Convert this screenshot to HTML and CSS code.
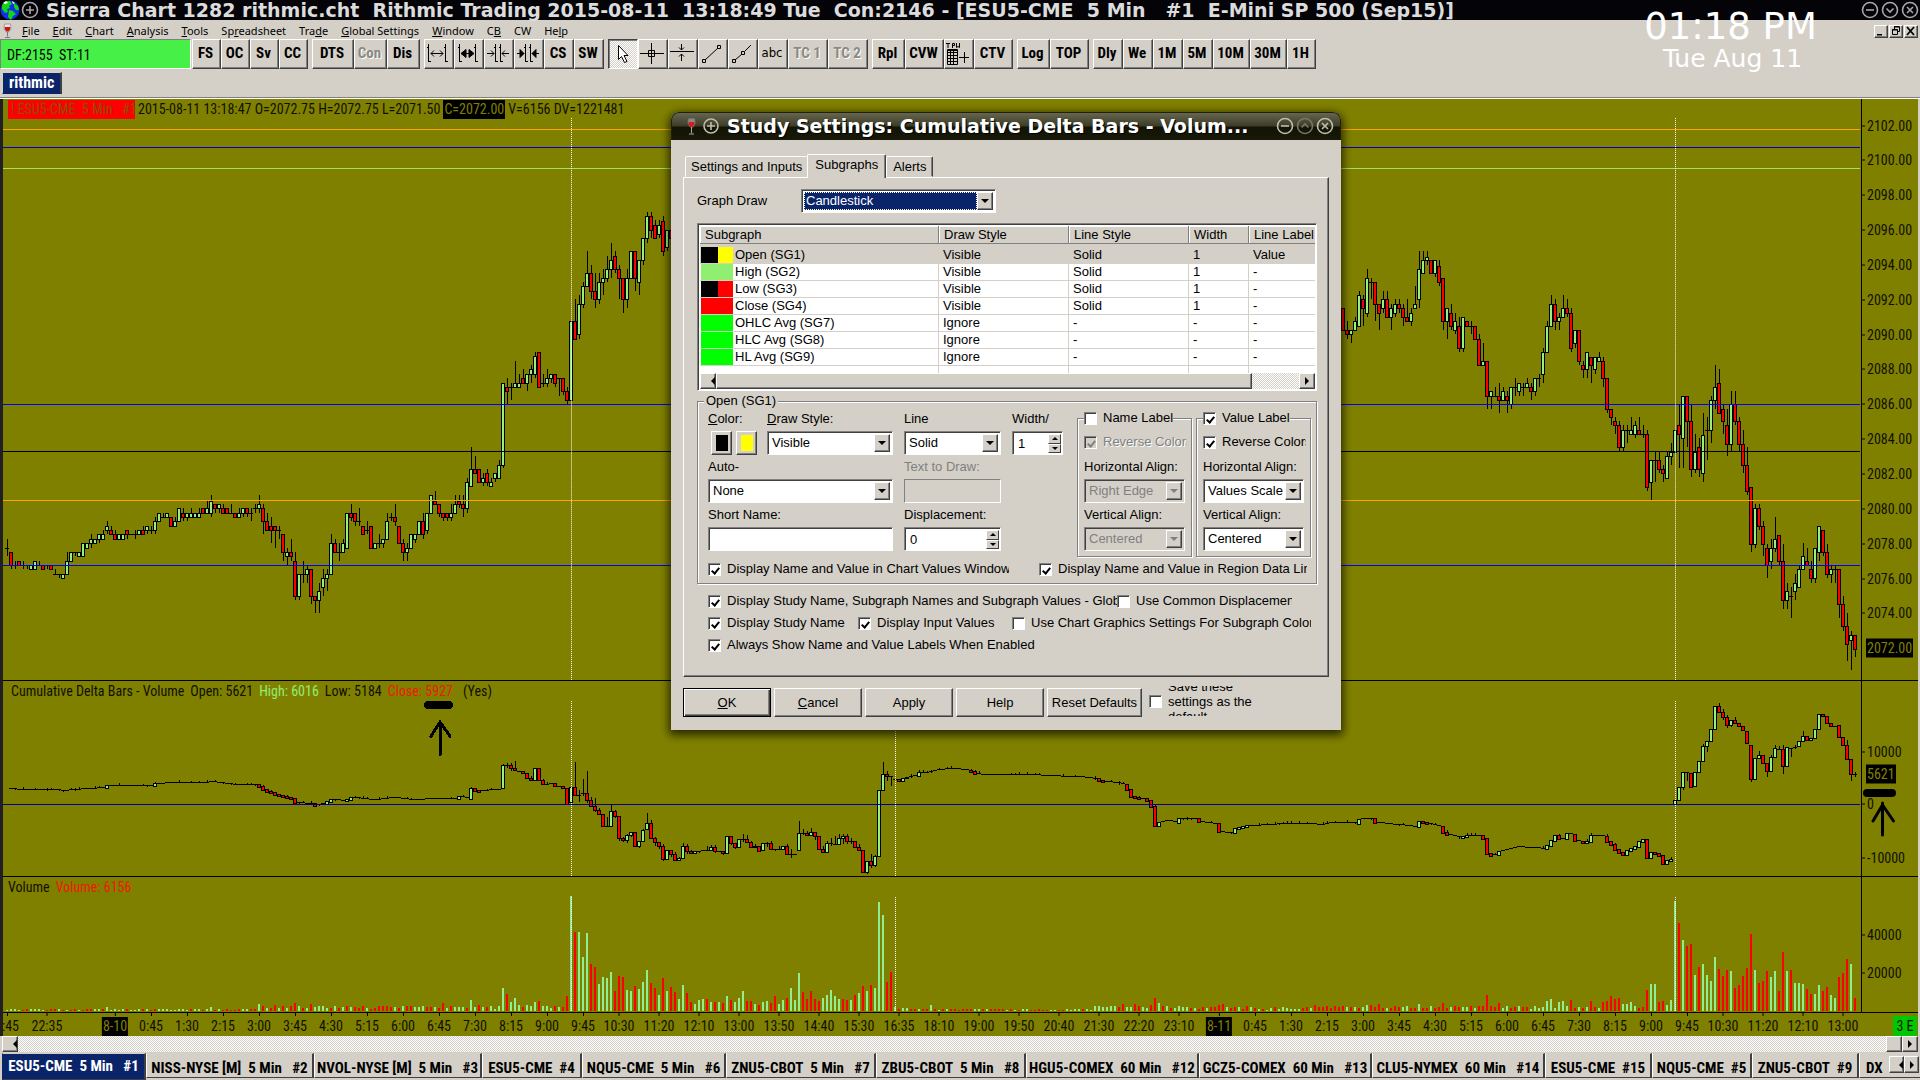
FILE: index.html
```html
<!DOCTYPE html>
<html lang="en">
<head>
<meta charset="utf-8">
<title>Sierra Chart 1282 rithmic.cht</title>
<link rel="stylesheet" href="styles.css">
</head>
<body>
<header class="titlebar">
  <svg class="globe" width="20" height="20" viewBox="0 0 20 20"><circle cx="10" cy="10" r="9.500" fill="#1030e8"/><path d="M2 5l4-4 4 0 2 3-3 2 1 2-3 1 1 3-3 1-3-4zM9 10l4 1 3 3-3 2-2 4-3-3zM14 3l4 3 1 4-3 0-2-3z" fill="#10d810"/><path d="M3 3l3-2 2 2-3 1zM12 1l3 2-2 1z" fill="#fff"/></svg>
  <svg width="20" height="20" viewBox="0 0 20 20" class="ring"><circle cx="10" cy="10" r="7.500"/><path d="M6 10h8M10 6v8"/></svg>
  <h1>Sierra Chart 1282 rithmic.cht&nbsp; Rithmic Trading 2015-08-11&nbsp; 13:18:49 Tue&nbsp; Con:2146 - [ESU5-CME&nbsp; 5 Min&nbsp;&nbsp; #1&nbsp; E-Mini SP 500 (Sep15)]</h1>
  <span class="winbtns">
    <button aria-label="Minimize"><svg width="20" height="20" viewBox="0 0 20 20" class="ring"><circle cx="10" cy="10" r="7.500"/><path d="M6 10h8"/></svg></button>
    <button aria-label="Restore"><svg width="20" height="20" viewBox="0 0 20 20" class="ring"><circle cx="10" cy="10" r="7.500"/><path d="M6.500 8.500l3.500 3.500 3.500-3.500"/></svg></button>
    <button aria-label="Close"><svg width="20" height="20" viewBox="0 0 20 20" class="ring"><circle cx="10" cy="10" r="7.500"/><path d="M7 7l6 6M13 7l-6 6"/></svg></button>
  </span>
</header>

<nav class="menubar">
  <svg class="glass" width="9" height="16" viewBox="0 0 9 16"><path d="M1.500 1h6l.5 4.500-2 3.500H3L1 5.500z" fill="#e8e4e0" stroke="#888" stroke-width=".7"/><path d="M1.500 4h6l-.5 2.500L5.500 8.500h-2L2 6.500z" fill="#c81818"/><path d="M4.500 9v4.500M2 14.500h5" stroke="#777" fill="none"/></svg>
  <a href="#"><u>F</u>ile</a><a href="#"><u>E</u>dit</a><a href="#"><u>C</u>hart</a><a href="#"><u>A</u>nalysis</a><a href="#"><u>T</u>ools</a><a href="#">Sp<u>r</u>eadsheet</a><a href="#">Tra<u>d</u>e</a><a href="#"><u>G</u>lobal Settings</a><a href="#"><u>W</u>indow</a><a href="#">C<u>B</u></a><a href="#">CW</a><a href="#">He<u>l</u>p</a>
  <span class="mdi">
    <button class="raised" aria-label="Minimize chart"><svg width="12" height="10" viewBox="0 0 12 10"><path d="M2 8h5v1.500H2z"/></svg></button>
    <button class="raised" aria-label="Restore chart"><svg width="12" height="10" viewBox="0 0 12 10" fill="none" stroke="#000"><path d="M4.500 3V.5h5v5H8M2.500 3.500h5v5h-5zM4 1h5M2 4h5"/></svg></button>
    <button class="raised" aria-label="Close chart"><svg width="12" height="10" viewBox="0 0 12 10"><path d="M2 1l7 8M9 1L2 9" stroke="#000" stroke-width="1.800"/></svg></button>
  </span>
</nav>

<section class="toolbar">
  <div class="status">DF:2155&nbsp; ST:11</div>
  <div class="group"><button class="w29">FS</button><button class="w29">OC</button><button class="w29">Sv</button><button class="w29">CC</button></div>
  <div class="group"><button class="w42">DTS</button><button class="w33" disabled>Con</button><button class="w33">Dis</button></div>
  <div class="group">
    <button class="w30" aria-label="Increase spacing"><svg width="26" height="26" viewBox="0 0 26 26"><path d="M3.500 3v18M2 6.500h2M4 20.500h2M20.500 3v18M19 6.500h2M21 20.500h2M6 12.500h12M9 9.500l-3 3 3 3M15 9.500l3 3-3 3"/></svg></button>
    <button class="w30" aria-label="Increase width"><svg width="26" height="26" viewBox="0 0 26 26"><path d="M4.500 3v18M3 6.500h2M5 20.500h2M20.500 3v18M19 6.500h2M21 20.500h2M6 12.500h12"/><path d="M6 12.500l5-4v8zM19 12.500l-5-4v8z" fill="#000"/></svg></button>
    <button class="w30" aria-label="Decrease spacing"><svg width="26" height="26" viewBox="0 0 26 26"><path d="M10.500 3v18M9 6.500h2M11 20.500h2M15.500 3v18M14 6.500h2M16 20.500h2M2 12.500h7M6 9.500l3 3-3 3M24 12.500h-7M20 9.500l-3 3 3 3"/></svg></button>
    <button class="w30" aria-label="Decrease width"><svg width="26" height="26" viewBox="0 0 26 26"><path d="M10.500 3v18M9 6.500h2M11 20.500h2M15.500 3v18M14 6.500h2M16 20.500h2M2 12.500h7M24 12.500h-7"/><path d="M9 12.500l-4-4v8zM17 12.500l4-4v8z" fill="#000"/></svg></button>
    <button class="w30">CS</button><button class="w30">SW</button>
  </div>
  <div class="group">
    <button class="w30 pressed" aria-label="Pointer"><svg width="26" height="26" viewBox="0 0 26 26"><path d="M9.500 4.500v14l3-3 3 6 2.500-1-3-6h4z" fill="#fff"/></svg></button>
    <button class="w30" aria-label="Cross hair"><svg width="26" height="26" viewBox="0 0 26 26"><path d="M1 12.500h24M12.500 2v21M9.500 9.500h6v6h-6z"/></svg></button>
    <button class="w30" aria-label="Horizontal line"><svg width="26" height="26" viewBox="0 0 26 26"><path d="M1 10.500h24M12.500 3v6M10 6.500l2.500 2.500L15 6.500M12.500 20v-7M10 15.500l2.500-2.500 2.500 2.500"/></svg></button>
    <button class="w30" aria-label="Line"><svg width="26" height="26" viewBox="0 0 26 26"><path d="M6 19L19 7M3.500 18.500h3v3h-3zM18.500 4.500h3v3h-3z"/></svg></button>
    <button class="w30" aria-label="Ray"><svg width="26" height="26" viewBox="0 0 26 26"><path d="M6 19l7-6M16 10l6-6M3.500 18.500h3v3h-3zM12.500 10.500h3v3h-3z"/></svg></button>
    <button class="w30 plain">abc</button><button class="w40" disabled>TC 1</button><button class="w40" disabled>TC 2</button>
  </div>
  <div class="group"><button class="w33">Rpl</button><button class="w39">CVW</button><button class="w30" aria-label="Trade price window"><svg width="26" height="26" viewBox="0 0 26 26"><path d="M1 2.500h4M3 2v5M7.500 7V2.500h2v2h-2M11.500 2v4.500l1.500-1 1.500 1V2" /><path d="M2.500 8.500h10v15h-10zM2 11.500h11M2 14.500h11M2 17.500h11M2 20.500h11M5.500 9v14M8.500 9v14M2 9.500h10M14 16.500h10M19.500 11v11"/></svg></button><button class="w39">CTV</button></div>
  <div class="group"><button class="w33">Log</button><button class="w39">TOP</button></div>
  <div class="group"><button class="w30">Dly</button><button class="w30">We</button><button class="w30">1M</button><button class="w30">5M</button><button class="w37">10M</button><button class="w37">30M</button><button class="w29">1H</button></div>
</section>

<section class="booktabs"><button>rithmic</button></section>

<main class="chart">
  <section class="pane price">
    <div class="plot"><svg id="price" preserveAspectRatio="none" viewBox="3 99 1858 582"></svg>
      <p class="legend"><span class="alert">! ESU5-CME&nbsp; 5 Min&nbsp;&nbsp; #1</span><span>2015-08-11 13:18:47 O=2072.75 H=2072.75 L=2071.50</span><span class="last">C=2072.00</span><span>V=6156 DV=1221481</span></p></div>
    <div class="axis" id="priceAxis"></div>
  </section>
  <section class="pane delta">
    <div class="plot"><svg id="delta" preserveAspectRatio="none" viewBox="3 682 1858 195"></svg>
      <p class="legend sub"><span>Cumulative Delta Bars - Volume</span><span>Open: 5621</span><span class="high">High: 6016</span><span>Low: 5184</span><span class="close">Close: 5927</span><span class="yes">(Yes)</span></p></div>
    <div class="axis" id="deltaAxis"><svg class="mark" width="40" height="50" viewBox="1860 788 40 50"><path d="M1866 794h25" stroke-width="8"/><path d="M1881.500 836v-32M1872 822l9.500-16 11 16" stroke-width="3"/></svg></div>
  </section>
  <section class="pane volume">
    <div class="plot"><svg id="volume" preserveAspectRatio="none" viewBox="3 878 1858 134"></svg>
      <p class="legend"><span>Volume</span><span class="close">Volume: 6156</span></p></div>
    <div class="axis" id="volumeAxis"></div>
  </section>
  <div class="time"><div class="times" id="times"></div><span class="badge">3 E</span></div>
</main>

<div class="scroll"><button class="raised" aria-label="Scroll left"><i class="tri left"></i></button><span class="track"></span><span class="thumb raised"></span><button class="raised" aria-label="Scroll right"><i class="tri right"></i></button></div>

<nav class="charttabs">
  <button class="active t144">ESU5-CME&nbsp; 5 Min&nbsp;&nbsp; #1</button><button class="t168">NISS-NYSE [M]&nbsp; 5 Min&nbsp;&nbsp; #2</button><button class="t168">NVOL-NYSE [M]&nbsp; 5 Min&nbsp;&nbsp; #3</button><button class="t100">ESU5-CME&nbsp; #4</button><button class="t144">NQU5-CME&nbsp; 5 Min&nbsp;&nbsp; #6</button><button class="t150">ZNU5-CBOT&nbsp; 5 Min&nbsp;&nbsp; #7</button><button class="t150">ZBU5-CBOT&nbsp; 5 Min&nbsp;&nbsp; #8</button><button class="t173">HGU5-COMEX&nbsp; 60 Min&nbsp;&nbsp; #12</button><button class="t173">GCZ5-COMEX&nbsp; 60 Min&nbsp;&nbsp; #13</button><button class="t173">CLU5-NYMEX&nbsp; 60 Min&nbsp;&nbsp; #14</button><button class="t107">ESU5-CME&nbsp; #15</button><button class="t100">NQU5-CME&nbsp; #5</button><button class="t107">ZNU5-CBOT&nbsp; #9</button><button class="t100">DX &nbsp;#10</button>
  <span class="spin"><button class="raised" aria-label="Previous tabs"><i class="tri left"></i></button><button class="raised" aria-label="Next tabs"><i class="tri right"></i></button></span>
</nav>

<aside class="clock"><time>01:18 PM</time><time class="date">Tue Aug 11</time></aside>

<form class="dialog" role="dialog" aria-label="Study Settings">
  <header>
    <svg width="12" height="20" viewBox="0 0 12 20"><path d="M2 2h7l.5 5-2 4H4L1.500 7z" fill="#8a8a80" stroke="#555"/><path d="M2.500 6h6L8 8.500 6.500 11h-2L3 8.500z" fill="#e01818"/><path d="M5.500 11v6M3 18h5" stroke="#aaa" fill="none"/></svg>
    <svg width="20" height="20" viewBox="0 0 20 20" class="ring"><circle cx="10" cy="10" r="7"/><path d="M6 10h8M10 6v8"/></svg>
    <h2>Study Settings: Cumulative Delta Bars - Volum...</h2>
    <span class="winbtns">
      <button type="button" aria-label="Minimize dialog"><svg width="20" height="20" viewBox="0 0 20 20" class="ring"><circle cx="10" cy="10" r="7.500"/><path d="M6 10h8"/></svg></button>
      <button type="button" aria-label="Shade dialog"><svg width="20" height="20" viewBox="0 0 20 20" class="ring dim"><circle cx="10" cy="10" r="7.500"/><path d="M6.500 11.500l3.500-3.500 3.500 3.500"/></svg></button>
      <button type="button" aria-label="Close dialog"><svg width="20" height="20" viewBox="0 0 20 20" class="ring"><circle cx="10" cy="10" r="7.500"/><path d="M7 7l6 6M13 7l-6 6"/></svg></button>
    </span>
  </header>
  <div class="dbody">
    <div class="dtabs"><button type="button">Settings and Inputs</button><button type="button" class="on">Subgraphs</button><button type="button">Alerts</button></div>
    <div class="panel">
      <div class="drawrow"><label for="gd">Graph Draw</label><span class="combo focus"><select id="gd"><option>Candlestick</option></select><i></i></span></div>
      <div class="list">
        <table>
          <colgroup><col class="c1"><col class="c2"><col class="c3"><col class="c4"><col></colgroup>
          <thead><tr><th>Subgraph</th><th>Draw Style</th><th>Line Style</th><th>Width</th><th>Line Label</th></tr></thead>
          <tbody>
            <tr class="sel"><td><b class="sw k-yellow"></b>Open (SG1)</td><td>Visible</td><td>Solid</td><td>1</td><td>Value</td></tr>
            <tr><td><b class="sw pale"></b>High (SG2)</td><td>Visible</td><td>Solid</td><td>1</td><td>-</td></tr>
            <tr><td><b class="sw k-red"></b>Low (SG3)</td><td>Visible</td><td>Solid</td><td>1</td><td>-</td></tr>
            <tr><td><b class="sw red"></b>Close (SG4)</td><td>Visible</td><td>Solid</td><td>1</td><td>-</td></tr>
            <tr><td><b class="sw green"></b>OHLC Avg (SG7)</td><td>Ignore</td><td>-</td><td>-</td><td>-</td></tr>
            <tr><td><b class="sw green"></b>HLC Avg (SG8)</td><td>Ignore</td><td>-</td><td>-</td><td>-</td></tr>
            <tr><td><b class="sw green"></b>HL Avg (SG9)</td><td>Ignore</td><td>-</td><td>-</td><td>-</td></tr>
            <tr class="rest"><td></td><td></td><td></td><td></td><td></td></tr>
          </tbody>
        </table>
        <div class="hbar"><button type="button" class="raised" aria-label="Scroll list left"><i class="tri left"></i></button><span class="raised grow"></span><span class="dither"></span><button type="button" class="raised" aria-label="Scroll list right"><i class="tri right"></i></button></div>
      </div>
      <fieldset class="sg">
        <legend>Open (SG1)</legend>
        <div class="cols">
          <div class="left">
            <div class="f color"><span><u>C</u>olor:</span><span class="chips"><button type="button" class="raised" aria-label="Primary color"><b class="black"></b></button><button type="button" class="raised" aria-label="Secondary color"><b class="yellow"></b></button></span></div>
            <div class="f"><label for="ds"><u>D</u>raw Style:</label><span class="combo"><select id="ds"><option>Visible</option></select><i></i></span></div>
            <div class="f"><label for="ls">Line</label><span class="combo"><select id="ls"><option>Solid</option></select><i></i></span></div>
            <div class="f"><label for="wd">Width/</label><span class="num"><input id="wd" value="1"><span class="ud"><i class="tri up"></i><i class="tri down"></i></span></span></div>
            <div class="f two"><label for="ac">Auto-</label><span class="combo"><select id="ac"><option>None</option></select><i></i></span></div>
            <div class="f off"><label for="td">Text to Draw:</label><input id="td" disabled></div>
            <div></div>
            <div class="f two"><label for="sn">Short Name:</label><input id="sn"></div>
            <div class="f"><label for="dp">Displacement:</label><span class="num"><input id="dp" value="0"><span class="ud"><i class="tri up"></i><i class="tri down"></i></span></span></div>
          </div>
          <fieldset class="lab">
            <legend><label class="ck"><input type="checkbox">Name Label</label></legend>
            <label class="ck off"><input type="checkbox" checked disabled>Reverse Colors</label>
            <div class="f"><label for="h1">Horizontal Align:</label><span class="combo off"><select id="h1" disabled><option>Right Edge</option></select><i></i></span></div>
            <div class="f"><label for="v1">Vertical Align:</label><span class="combo off"><select id="v1" disabled><option>Centered</option></select><i></i></span></div>
          </fieldset>
          <fieldset class="lab">
            <legend><label class="ck"><input type="checkbox" checked>Value Label</label></legend>
            <label class="ck"><input type="checkbox" checked>Reverse Colors</label>
            <div class="f"><label for="h2">Horizontal Align:</label><span class="combo"><select id="h2"><option>Values Scale</option></select><i></i></span></div>
            <div class="f"><label for="v2">Vertical Align:</label><span class="combo"><select id="v2"><option>Centered</option></select><i></i></span></div>
          </fieldset>
        </div>
        <div class="cks first"><label class="ck a"><input type="checkbox" checked>Display Name and Value in Chart Values Window</label><label class="ck b"><input type="checkbox" checked>Display Name and Value in Region Data Line</label></div>
      </fieldset>
      <div class="more">
        <div class="cks"><label class="ck c"><input type="checkbox" checked>Display Study Name, Subgraph Names and Subgraph Values - Global</label><label class="ck d"><input type="checkbox">Use Common Displacement</label></div>
        <div class="cks"><label class="ck e"><input type="checkbox" checked>Display Study Name</label><label class="ck g"><input type="checkbox" checked>Display Input Values</label><label class="ck h"><input type="checkbox">Use Chart Graphics Settings For Subgraph Colors</label></div>
        <div class="cks"><label class="ck"><input type="checkbox" checked>Always Show Name and Value Labels When Enabled</label></div>
      </div>
    </div>
    <div class="actions">
      <button type="button" class="default"><u>O</u>K</button><button type="button"><u>C</u>ancel</button><button type="button">Apply</button><button type="button">Help</button><button type="button" class="wide">Reset Defaults</button>
      <label class="ck save"><input type="checkbox"><span>Save these settings as the default</span></label>
    </div>
  </div>
</form>
<script src="script.js"></script>
</body>
</html>
```
FILE: styles.css
```css
*{box-sizing:border-box}
body{margin:0;min-height:100vh;display:flex;flex-direction:column;background:#d4d0c8;color:#000;font:13px/16px "Liberation Sans",sans-serif;overflow:hidden;position:relative}
button,input,select{font:inherit;color:inherit;margin:0;padding:0;border-radius:0}
button{background:#d4d0c8;border:0;white-space:nowrap}
h1,h2,p{margin:0;font-weight:normal}
i{display:block}
.raised{background:#d4d0c8;border:1px solid;border-color:#fff #404040 #404040 #fff;box-shadow:inset -1px -1px #808080}
.dither,.track{background:repeating-conic-gradient(#fff 0 25%,#d4d0c8 0 50%) 0 0/2px 2px}

.titlebar{display:flex;align-items:center;height:20px;background:#030308;color:#dcdcdc;flex:none}
.titlebar h1{font:bold 19px/20px "DejaVu Sans",sans-serif;margin-left:6px;flex:1;white-space:nowrap}
.ring{fill:none;stroke:#a8a8a8;stroke-width:1.6;display:block}
.ring.dim{stroke:#77776a}
.winbtns{display:flex}
.winbtns button{background:none}
.menubar{display:flex;align-items:center;height:19px;flex:none;padding:3px 2px 0 3px;font:11px/16px "Noto Sans",sans-serif}
.menubar a{color:#000;text-decoration:none;margin-right:13px}
.glass{margin-right:10px}
.mdi{margin-left:auto;display:flex;gap:1px}
.mdi button{width:14px;height:13px;display:flex;align-items:center}

.toolbar{display:flex;gap:4px;height:30px;flex:none;font:bold 15px/24px "Roboto Condensed","Roboto",sans-serif}
.status{width:191px;margin-right:-3px;padding-left:6px;line-height:30px;font-weight:normal;font-size:14px;background:#46f046;border:1px solid;border-color:#808080 #fff #fff #808080}
.group{display:flex}
.group button{height:30px;padding:0 2px 2px 0;border:1px solid;border-color:#fff #404040 #404040 #fff;box-shadow:inset -1px -1px #808080;display:flex;align-items:center;justify-content:center}
.group button:disabled{color:#8a8a84;text-shadow:1px 1px #fff}
.group svg{fill:none;stroke:#000;flex:none;margin-top:2px}
.group .pressed{border-color:#404040 #fff #fff #404040;box-shadow:inset 1px 1px #808080;background:repeating-conic-gradient(#fff 0 25%,#d4d0c8 0 50%) 0 0/2px 2px}
.group .plain{font:13px/24px "DejaVu Sans Condensed","DejaVu Sans",sans-serif}
.w29{width:29px}.w30{width:30px}.w33{width:33px}.w37{width:37px}.w39{width:39px}.w40{width:40px}.w42{width:42px}

.booktabs{height:30px;flex:none;padding:3px 2px;border-bottom:1px solid #fff;box-shadow:inset 0 -1px #808080}
.booktabs button{height:22px;padding:0 6px;background:#0a246a;color:#fff;font:bold 16px/20px "Roboto Condensed","Roboto",sans-serif;border:1px solid;border-color:#d4d0c8 #404040 #0a246a #d4d0c8;border-right-width:2px}

.chart{flex:1;display:flex;flex-direction:column;background:#808000;border-left:3px solid #202020;border-right:2px solid #d4d0c8;font:14px/18px "Roboto Condensed","Roboto",sans-serif;color:#101000;min-height:0}
.pane{display:flex;min-height:0;border-bottom:1px solid #000}
.price{flex:583 1 0}
.delta{flex:196 1 0}
.volume{flex:135 1 0}
.plot{flex:1;position:relative;min-width:0;border-right:1px solid #000}
.plot svg{display:block;width:100%;height:100%;position:absolute;inset:0;shape-rendering:crispEdges}
.axis{width:56px;position:relative}
.axis span{position:absolute;left:0;transform:translateY(-50%);line-height:19px;padding-left:5px;white-space:nowrap}
.axis span::before{content:"";position:absolute;left:0;top:9px;width:3px;height:1px;background:#000}
.axis span.last{left:4px;padding:0 1px;background:#000}
.axis span.last::before{content:none}
.legend{position:absolute;left:5px;top:1px;display:flex;line-height:19px;white-space:nowrap;gap:5px}
.volume .legend,.delta .legend{gap:6px}
.alert{background:#f00;color:#8c5000;padding:0 1px 0 3px;width:127px}
.price .legend{gap:3px}
.last{background:#000;color:#808000;padding:0 1px}
.delta .legend{left:8px}
.high{color:#90ee70}
.close{color:#f01800}
.yes{margin-left:4px}
.mark{position:absolute;left:-1px;top:106px;fill:none;stroke:#000;stroke-linecap:round}
.time{height:23px;flex:none;position:relative;display:flex;justify-content:flex-end;overflow:hidden}
.times{position:absolute;left:0;right:57px;top:0;height:23px}
.times span{position:absolute;top:4px;transform:translateX(-50%);line-height:19px}
.times span::before{content:"";position:absolute;left:50%;top:-4px;width:1px;height:3px;background:#000}
.times span.day{background:#000;color:#808000;padding:0 1px}
.badge{align-self:flex-end;width:24px;height:20px;margin-right:1px;line-height:20px;background:#00c800;text-align:center}

.scroll{display:flex;height:16px;flex:none;padding:0 2px}
.track{flex:1}
.scroll button,.scroll .thumb{width:16px}
.scroll button,.hbar button,.spin button{display:flex;align-items:center;justify-content:center}
.tri{width:0;height:0;border:4px solid transparent}
.tri.left{border-right-color:#000;border-left-width:0}
.tri.right{border-left-color:#000;border-right-width:0}

.charttabs{display:flex;height:28px;flex:none;padding:1px 0 0 2px;position:relative;overflow:hidden;font:bold 15px/24px "Roboto Condensed","Roboto",sans-serif}
.charttabs>button{flex:none;height:25px;padding-top:2px;border:1px solid;border-color:#d4d0c8 #404040 #404040 #fff;border-right-width:2px;text-align:center;overflow:hidden}
.charttabs>.active{background:#0a246a;color:#fff;height:27px;border-left-color:#0a246a;padding:0 0 3px}
.charttabs>button:nth-last-child(2){text-align:left;padding-left:6px}
.t100{width:100px}.t107{width:107px}.t144{width:144px}.t150{width:150px}.t168{width:168px}.t173{width:173px}
.spin{position:absolute;right:1px;top:4px;display:flex}
.spin button{width:15px;height:17px}

.clock{position:absolute;right:103px;top:5px;width:173px;color:#fff;text-align:center;font:37px/44px "DejaVu Sans",sans-serif;white-space:nowrap}
.clock time{display:block}
.clock .date{font-size:25px;line-height:20px;padding-left:4px}

.dialog{position:absolute;left:671px;top:112px;width:670px;box-shadow:0 3px 10px 2px rgba(0,0,0,.7);border-radius:8px 8px 0 0;background:#d4d0c8}
.dialog>header{display:flex;align-items:center;height:28px;padding:0 5px 2px 14px;border-radius:8px 8px 0 0;border:1px solid #20200c;border-bottom:0;background:linear-gradient(#66664e,#3c3c28 48%,#141404 52%,#181808)}
.dialog>header h2{flex:1;font:bold 19px/26px "DejaVu Sans",sans-serif;color:#fff;margin-left:6px;white-space:nowrap;text-shadow:1px 1px #000}
.dialog>header>.ring{margin-left:3px}
.dialog .ring{stroke:#bdbdb0}
.dialog .ring.dim{stroke:#77776a}
.dbody{padding:14px 12px 14px}
.dtabs{display:flex;align-items:flex-end;padding-left:2px;height:23px}
.dtabs button{height:21px;padding:0 6px;border:1px solid;border-color:#fff #404040 transparent #fff;border-radius:2px 2px 0 0;box-shadow:inset -1px 0 #808080}
.dtabs button:first-child{padding:0 5px;border-right:0;box-shadow:none}
.dtabs .on{height:24px;margin-bottom:-1px;padding:0 7px 3px;position:relative;border-bottom:0}
.panel{border:1px solid;border-color:#fff #404040 #404040 #fff;box-shadow:inset -1px -1px #808080;padding:11px 11px 20px 13px}
.drawrow{display:flex;align-items:center}
.drawrow label{width:104px}
.drawrow .combo{width:195px}
.combo{display:flex;height:24px;border:1px solid;border-color:#808080 #fff #fff #808080;box-shadow:inset 1px 1px #404040;background:#fff;padding:2px}
.combo select{appearance:none;border:0;background:none;flex:1;min-width:0;padding-left:2px;outline:0;opacity:1}
.combo i{width:16px;flex:none;border:1px solid;border-color:#fff #404040 #404040 #fff;box-shadow:inset -1px -1px #808080;background:#d4d0c8;display:flex;align-items:center;justify-content:center}
.combo i::before{content:"";border:4px solid transparent;border-top-color:#000;border-bottom:0}
.combo.off{background:#d4d0c8;color:#808080}
.combo.off select{color:#808080}
.combo.off i::before{border-top-color:#808080}
.focus select{background:#0a246a;color:#fff;outline:1px dotted #fff;outline-offset:-1px}
.list{margin-top:10px;border:1px solid;border-color:#808080 #fff #fff #808080;box-shadow:inset 1px 1px #404040;padding:2px 1px 1px 2px;background:#fff}
table{border-collapse:separate;border-spacing:0;table-layout:fixed;width:100%}
.c1{width:239px}.c2{width:130px}.c3{width:120px}.c4{width:60px}
th{height:18px;padding:0 5px;text-align:left;font-weight:normal;background:#d4d0c8;border-right:1px solid #808080;border-bottom:1px solid #808080;box-shadow:inset 1px 1px #fff;white-space:nowrap}
th:last-child{border-right:0}
td{height:17px;line-height:16px;padding:0 4px;border-right:1px solid #d4d0c8;border-bottom:1px solid #d4d0c8;white-space:nowrap}
td:last-child{border-right:0}
td:first-child{padding-left:1px}
.sel td{background:#d4d0c8;height:20px;padding-top:3px}
.sw{display:inline-block;width:32px;height:16px;margin-right:2px;vertical-align:top}
.rest td{height:7px;border-bottom:0}
.k-yellow{background:linear-gradient(90deg,#000 17px,#ff0 17px)}
.k-red{background:linear-gradient(90deg,#000 17px,#f00 17px)}
.pale{background:#90ee70}
.red{background:#f00}
.green{background:#0f0}
.black{background:#000}
.yellow{background:#ff0}
.hbar{display:flex;height:16px}
.hbar button{width:16px}
.hbar .grow{flex:1}
.hbar .dither{width:47px}
fieldset{margin:0;padding:0;min-width:0;border:1px solid #808080;box-shadow:1px 1px #fff,inset 1px 1px #fff}
legend{padding:0 2px}
.sg{margin-top:2px;padding:1px 5px 2px 10px}
.sg>legend{margin-left:-4px;background:#d4d0c8}
.cols{display:flex;gap:4px}
.left{display:grid;grid-template-columns:48px 126px 97px 51px;column-gap:11px;flex:1;align-content:start}
.two{grid-column:span 2}
.f{display:flex;flex-direction:column;height:48px}
.f>label,.f>span:first-child{height:20px;line-height:16px;padding-top:1px;margin-bottom:1px}
.f>input{height:24px;width:100%;padding:0 4px;background:#fff;border:1px solid;border-color:#808080 #fff #fff #808080;box-shadow:inset 1px 1px #404040}
.f>input:disabled{background:#d4d0c8;box-shadow:none}
.f.off{color:#808080}
.chips{display:flex;gap:4px;padding-left:3px;width:52px}
.chips button{width:21px;height:24px;flex:none;display:flex;align-items:center;justify-content:center}
.chips b{width:12px;height:16px}
.num{display:flex;height:24px;border:1px solid;border-color:#808080 #fff #fff #808080;box-shadow:inset 1px 1px #404040;background:#fff;padding:2px 1px 1px 2px}
.num input{border:0;background:none;flex:1;min-width:0;width:0;padding-left:3px}
.ud{width:13px;display:flex;flex-direction:column}
.ud .tri{flex:1;width:auto;height:auto;background:#d4d0c8;border:1px solid;border-color:#fff #404040 #404040 #fff;display:flex;align-items:center;justify-content:center}
.ud .tri::before{content:"";border:3px solid transparent}
.ud .up::before{border-top:0;border-bottom-color:#000}
.ud .down::before{border-bottom:0;border-top-color:#000}
.lab{width:115px;height:147px;padding:0 4px 0 6px}
.lab legend{padding:0;background:#d4d0c8;margin:0}
.lab>.ck{height:32px}
.lab legend .ck{height:16px}
.lab .f{margin-right:2px}
.lab .f>label{white-space:nowrap}
.ck{display:flex;align-items:center;white-space:nowrap;overflow:hidden}
.ck input{appearance:none;flex:none;width:13px;height:13px;margin-right:6px;background:#fff;border:1px solid;border-color:#808080 #fff #fff #808080;box-shadow:inset 1px 1px #404040;position:relative}
.ck input:checked::after{content:"";position:absolute;left:4px;top:2px;width:3px;height:6px;border:solid #000;border-width:0 2px 2px 0;transform:rotate(40deg)}
.ck.off{color:#808080;text-shadow:1px 1px #fff}
.ck.off input{background:#d4d0c8}
.ck.off input:checked::after{border-color:#808080}
.cks{display:flex;height:22px;align-items:center}
.cks.first{height:24px}
.a{width:301px;margin-right:30px}.b{width:268px}
.c{width:409px}.d{width:175px}.e{width:150px}.g{width:154px}.h{width:299px}
.more{padding:6px 0 0 11px}
.actions{display:flex;gap:3px;padding-top:9px;height:39px}
.actions button{width:88px;height:29px;margin-top:2px;border:1px solid;border-color:#fff #404040 #404040 #fff;box-shadow:inset -1px -1px #808080}
.actions .default{border-color:#000;box-shadow:inset 1px 1px #fff,inset -1px -1px #404040,inset -2px -2px #808080}
.actions .wide{width:95px}
.save{height:30px;margin-left:4px;width:115px;white-space:normal;line-height:15px}
.save span{flex:1}
```
FILE: script.js
```js
// Bars sit 4px apart, the first one at x=7.
const barX = i => 7 + 4 * i;

// Each bar: colour letter (g up, r down, d doji), body top, body bottom, wick top, wick bottom.
const leftBars = `d 1108 1108 1080 1130|r 1120 1159 0 1170|d 1159 1159 1147 1170|r 1147 1159|d 1159 1159 1147 1170|d 1159 1159 0 1170|g 1159 1171|g 1147 1171|d 1159 1159 1147|r 1159 1171|d 1159 1159 0 1170|r 1159 1171|d 1186 1186 1171|d 1186 1186 0 1197|g 1186 1198|g 1147 1186 1120|g 1120 1147|d 1120 1120 0 1132|g 1120 1132|g 1093 1132|g 1093 1108|g 1081 1093 1066 1108|g 1081 1093|g 1066 1081 0 1092|g 1066 1081 1054|g 1042 1054 1026 1066|r 1054 1066 1042|r 1066 1081 1054|g 1066 1081|g 1066 1081|r 1054 1066 0 1081|d 1066 1066|d 1066 1066 1054 1081|g 1054 1066|r 1054 1066 1042|g 1042 1054 0 1066|d 1054 1054 1042 1066|g 1027 1054 1015 1066|g 1003 1027|d 1015 1015 1003|g 1003 1015|r 1015 1042|g 1027 1042 1015|g 988 1027|r 1003 1015 988 1027|g 1003 1015 0 1027|g 1003 1015 988|g 1003 1015|g 1003 1015 988|r 988 1003|g 988 1003 965|g 965 1003 948 1015|r 976 988 0 1003|g 976 988 0 1003|r 988 1003 976|r 988 1003|d 1003 1003 976|r 1003 1015|g 1003 1015 988|g 988 1003 0 1015|r 988 1003 0 1015|d 1003 1003 988 1026|d 988 988 976 1003|g 976 988 948 1003|r 988 1027 976 1064|r 1027 1054 1003|r 1042 1054 1015 1092|r 1042 1054 0 1107|d 1054 1054 1042 1080|r 1066 1120 0 1146|g 1120 1132 1108 1159|r 1120 1132 1080 1146|r 1147 1252 1120 1263|g 1186 1252 0 1263|d 1186 1186 1147 1213|g 1171 1186 1160 1213|r 1171 1252 0 1275|r 1252 1264 0 1302|g 1237 1264 1213 1302|g 1198 1225 1171 1251|g 1186 1198 1171 1236|g 1093 1186 1065|r 1093 1120 1080|d 1120 1120 1092 1146|g 1093 1120 1080|g 1003 1108|r 1003 1015 976 1027|r 1003 1027 0 1042|d 1027 1027 988 1040|r 1042 1066|d 1054 1054 1026 1065|r 1042 1108|g 1093 1108|d 1093 1093 1066 1107|g 1081 1093 0 1108|g 1027 1081 1003|d 1015 1015 1003 1027|r 1015 1027 976 1040|r 1042 1093|r 1093 1120 1080 1146|g 1108 1120 1093 1146|g 1066 1108|g 1066 1081 0 1092|g 1027 1066|r 1027 1066 1003 1080|g 1003 1054 0 1066|g 949 1003|r 965 976 936|r 976 1003 0 1013|r 1003 1015 0 1026|r 1003 1015 0 1026|g 1003 1015 976 1026|g 976 1003 948|r 965 976 948 988|r 976 988 948 1013|g 910 988 897 1002|g 871 922 804|r 871 883 831|r 871 910|g 898 910 883 920|r 883 910 870 920|g 910 922 896|g 883 898 0 908|g 859 898 843|g 610 859 0 868|r 622 634 594 672|d 622 622 610 660|g 610 622 543|g 610 622 583|r 595 610 568|g 583 610 0 632|g 568 583 555 608|g 529 583 516 593|r 517 622|d 610 610 583 620|g 595 610 568 620|g 583 595 0 608|r 583 610 0 620|d 595 595 0 648|r 595 634 0 646|r 634 661 622 672|g 424 661|r 424 478 357|g 373 463 345 476|g 319 373 307 383|g 280 319 213|r 280 334 255 356|r 334 358 279 383|g 307 358 279 372|g 295 307 267 345|g 268 295 228 305|g 241 268 189 293|r 229 268 213 279|r 268 295 255 356|r 295 358 0 399|g 295 358 268 383|g 214 295|r 214 295 0 332|g 241 307 0 345|g 175 241 0 254|g 109 175 96 188|r 109 151 96 175|r 136 175 121|g 136 163 121 174|r 124 214 109 228|g 151 202 0 212|r 151 175`;
const rightBars = `r 554 612|r 612 623 588 635|g 612 623 0 646|g 588 612 577|g 519 602 508|r 530 554 519 600|g 474 567 449 577|d 485 485 474 530|r 485 543 0 587|r 543 567 0 611|g 530 554 508 565|r 530 577 508|g 554 577 543 611|g 543 567 530 578|r 543 554 530 567|r 554 577 543 600|r 577 588 530|g 567 588 554 600|g 543 554 495|g 450 530 401 553|g 426 461 401|g 416 426 401 438|r 426 461|g 426 461 0 471|r 440 485 426 495|r 474 588 0 611|g 554 588 0 635|r 567 602 543 611|g 588 612 567 622|r 602 660 577 670|g 577 660 0 670|r 588 602|d 602 602 588 623|r 602 636|r 636 705 622|g 695 705 646|r 695 788 0 820|g 774 788 0 820|d 788 788 764|r 788 798 753 832|g 774 798 764|r 788 798 774 832|g 764 809 0 820|d 764 764 740 787|g 753 774 0 787|d 764 764 753 787|g 753 764 740|r 764 774 753 797|g 740 774 0 787|d 740 740 728 764|g 670 729 660 751|g 602 670 588|g 543 602 518|r 543 588 530 611|g 577 588 567 611|g 554 577 518|r 554 567 530 577|r 567 660 554 670|g 612 647 0 658|r 612 695 0 705|r 705 716 695 739|g 670 716 0 739|r 682 705 0 751|g 682 716 0 727|g 682 695 670|r 695 740 682 763|r 740 822 0 832|r 822 843 0 866|r 856 867 843 890|r 867 926 856 937|g 881 926 867 937|d 881 881 867 914|g 881 891 843|g 867 891 856 902|r 881 891 843|d 891 891 867 902|r 891 1030 881 1042|g 960 1019 0 1066|d 960 960 938 1018|r 960 984 938 994|r 984 995 973 1018|g 950 1008 938|g 937 950 914 973|g 881 937|r 867 891 809 982|g 788 902 0 982|r 788 857 0 926|r 857 984 809 1006|g 937 984 891 994|r 926 984 902 1006|g 892 995 832 1018|d 881 881 843 960|g 798 881 788 914|g 764 798 704 822|r 753 832 715|r 822 857 809 890|r 867 916 822 948|g 809 916 773 937|r 809 857 773 867|r 857 916 843 937|r 916 974 881 994|r 974 1043 926 1052|r 1030 1182 0 1204|g 1088 1182 1077 1193|r 1088 1136 1077 1146|r 1136 1182 1123 1215|r 1194 1239 1182 1273|g 1194 1229 1170 1249|g 1170 1194 1111 1204|r 1158 1229 0 1239|r 1229 1332 1182 1355|g 1309 1332 1286 1355|d 1322 1322 1297 1379|g 1287 1309 1263 1331|g 1250 1298 1239|g 1216 1250 1180|r 1229 1239 1193|r 1250 1274 1229 1286|g 1194 1274 0 1286|g 1136 1205 0 1228|r 1146 1205 0 1216|r 1205 1263 1182 1274|g 1250 1263 1239 1286|d 1250 1250 1239 1286|r 1250 1343 0 1379|r 1343 1402 1322 1414|r 1402 1449 1367 1493|g 1426 1437 1414 1518|r 1425 1461 0 1483`;
const deltaMid = `g 48 118 45|d 48 48 42 57|r 48 58 42 66|r 58 64 36|d 66 66|r 66 73|r 73 86|r 86 92 80|g 58 92|r 58 94|r 94 106 91|d 105 105 98|d 103 103|r 103 112|d 112 112|r 112 118|r 118 164|g 115 158|r 115 139 39 142|d 137 137 124 158|d 133 133 90 140|r 133 154 66 161|r 154 172 144|r 172 184 147 188|r 184 196 178|r 196 230|d 230 230 203|g 187 230 168|r 187 202 183 206|r 202 268 0 275|r 268 274 265 278|g 259 274 255 281|g 250 259 0 265|r 250 290 0 293|g 277 290 0 296|g 244 277 240|g 223 241 192|r 223 268 213|r 268 280 265 290|r 280 292 0 299|r 292 331 284 336|g 304 331|r 304 316 0 324|r 316 334 309|g 328 334 323|g 292 328 282|r 292 307 285 315|r 307 313 303|g 307 313|d 306 306 0 311|d 302 302|d 302 302 291|g 295 304 288|r 295 307 288 311|d 306 306|r 306 313 0 317|g 262 313|r 262 283 0 287|r 283 295 0 299|g 271 295|d 271 271 255 280|r 271 280 258|r 280 295 276|g 290 295 285|r 292 307|g 283 304|d 283 283 279 293|r 283 301 276|d 299 299 0 305|d 299 299 291|g 292 301|r 292 316 285|d 316 316 300 327|d 314 314|g 253 304 216|d 253 253 240 258|r 253 259 246|g 250 259 237|r 250 262 0 272|r 262 301|r 301 310 291|g 283 310 276|d 283 283 267 290|d 286 286 261|g 268 286 255|g 262 268 256 285|r 262 277 255 285|d 277 277 268 285|r 277 295|r 295 304 285|r 304 370|g 337 370 0 375|r 337 349 315 357|g 322 349 318 354|g 124 322|g 76 124 39|r 76 82 66 96|d 82 82 0 111|d 90 90|r 91 97|g 88 97|g 83 88`;
const deltaEnd = `g 334 346|g 295 334|g 250 295 0 303|d 250 250 0 275|r 253 293|g 250 290|g 217 250|g 172 217 165|g 157 172 0 190|g 121 157|g 52 121|r 52 70 42|r 70 85 60 94|r 85 109 78 118|g 94 109 0 115|r 94 103 85|r 103 112|r 112 124|r 127 163|r 169 271 0 280|g 208 271|g 199 208 186|r 199 223|r 223 247 0 265|g 205 247 198|g 178 205 169|d 180 180 172|r 181 232 169 254|g 175 232|d 176 176 0 205|d 175 175 168 180|g 157 172|g 142 157 126|r 142 154|g 148 154|g 121 148|g 76 121|r 76 82|r 82 103|r 103 112|d 110 110|r 109 145|r 145 169|r 169 211 153|r 211 256 0 277|d 254 254 248 263`;
// Closing values of the quiet stretches: bar index, y in thirds of a pixel below 670.
const quietA = [[0,357],[2,359],[12,361],[14,364],[16,361],[24,354],[25,347],[36,349],[37,342],[43,338],[46,341],[51,337],[56,345],[62,346],[63,352],[64,361],[66,370],[70,384],[71,388],[72,400],[76,401],[77,407],[79,401],[81,390],[84,394],[86,384],[92,391],[96,384],[101,391],[107,386],[111,389],[112,387],[113,381],[115,386],[116,358],[118,366],[121,361],[123,361]];
const quietB = [[225,323],[226,320],[227,319],[228,308],[230,309],[233,300],[236,296],[240,303],[242,311],[244,316],[250,315],[254,314],[258,317],[264,320],[270,323],[272,328],[274,336],[277,340],[279,345],[280,361],[281,380],[283,388],[284,386],[285,392],[286,411],[287,468],[288,458],[290,452],[292,458],[293,448],[297,448],[298,455],[301,463],[302,463],[303,487],[306,490],[307,478],[310,468],[314,466],[320,461],[326,462],[328,466],[330,461],[334,458],[337,461],[338,450],[340,446],[341,448],[342,459],[346,464],[352,471],[353,455],[355,463],[358,470],[359,488],[360,496],[363,505],[365,497],[368,498],[369,508],[370,552],[371,558],[372,556],[373,545],[375,540],[378,532],[384,537],[385,527],[386,512],[387,499],[388,508],[389,508],[390,491],[391,494],[392,512],[393,515],[394,520],[395,515],[396,497],[399,500],[400,517],[401,525],[402,540],[404,556],[405,543],[407,530],[408,515],[409,511],[410,563],[411,548],[413,558],[414,582],[415,574],[416,569]];

const parse = (text, start, y) => text.split('|').map((s, k) => {
  const [c, a, b, t, w] = s.split(' ');
  return { i: start + k, c, top: y(+a), bot: y(+b), wt: y(+(+t ? t : a)), wb: y(+(w || b)) };
});
// Small repeatable variation, so that the quiet bars are not all alike.
let seed = 7;
const rnd = () => (seed = (seed * 1103515245 + 12345) % 2147483648) / 2147483648;

function quiet(keys) {
  const out = [];
  let prev = keys[0][1];
  for (let k = 1; k < keys.length; k++) {
    const [i0, y0] = keys[k - 1], [i1, y1] = keys[k];
    for (let i = i0 + 1; i <= i1; i++) {
      const y = y0 + (y1 - y0) * (i - i0) / (i1 - i0);
      const px = v => 670 + v / 3, a = Math.min(prev, y), b = Math.max(prev, y);
      const big = b - a > 3;
      out.push({ i, c: big ? (y > prev ? 'r' : 'g') : 'd', top: px(a), bot: px(big ? b : a) + (big ? 1 : 0),
        wt: px(a - (rnd() > .7 ? 4 : 0)), wb: px(b + (rnd() > .8 ? 4 : 0)) });
      prev = y;
    }
  }
  return out;
}

const rect = (x, y, w, h, f) => `<rect x="${x}" y="${y}" width="${w}" height="${h}" fill="${f}"/>`;
const fills = { g: '#98f07c', r: '#f00' };
function candles(bars) {
  return bars.map(b => {
    const x = barX(b.i), t = Math.round(b.top), m = Math.round(b.bot), wt = Math.round(b.wt), wb = Math.round(b.wb);
    let s = rect(x, wt, 1, Math.max(1, wb - wt), '#000') + rect(x - 2, t, 4, Math.max(1, m - t + 1), '#000');
    if (b.c !== 'd' && m - t > 1) s += rect(x - 1, t + 1, 2, m - t - 1, fills[b.c]);
    return s;
  }).join('');
}
const hline = (y, f) => rect(3, y, 1857, 1, f);
function dots(x, y0, y1) {
  return `<line x1="${x + .5}" x2="${x + .5}" y1="${y0}" y2="${y1}" stroke="#fff" stroke-width="1" stroke-dasharray="1 1"/>`;
}

const price = [...parse(leftBars, 0, v => 180 + v / 3), ...parse(rightBars, 334, v => 100 + v / 2.658)];
document.getElementById('price').innerHTML =
  candles(price) + hline(129, '#ffa500') + hline(147, '#0000c8') + hline(168, '#a8e060') + hline(404, '#00f') +
  hline(452, '#000') + hline(501, '#ffa500') + hline(566, '#00f') + dots(571, 118, 681) + dots(1675, 118, 681);

const delta = [...quiet(quietA), ...parse(deltaMid, 124, v => 750 + v / 3), ...quiet(quietB), ...parse(deltaEnd, 417, v => 690 + v / 3)];
document.getElementById('delta').innerHTML =
  candles(delta) + hline(805, '#0000a0') + dots(571, 702, 877) + dots(895, 702, 877) + dots(1675, 702, 877) +
  '<path d="M428 706h21" stroke="#000" stroke-width="8" stroke-linecap="round"/><path d="M440 756V724M431 737l9-14 10 14" fill="none" stroke="#000" stroke-width="3" stroke-linecap="round"/>';

// Volume bars: colour and height in thirds of a pixel.
const volMid = 'g6 g15 g66 r48 g27 g39 g18 r12 g18 g15 g27 r30 g15 g15 g9 r15 g12 r12 r42 g342 r234 g234 g159 g231 r138 r129 g78 g99 g96 g114 r57 r102 r99 g60 g57 r72 g63 g84 g120 r81 r66 g45 r96 g57 r69 r54 g36 g75 r51 r27 g21 g33 g36 r36 g27 r27 g27 r24 g42 r33 g27 g39 g57 r30 r30 g21 r18 g27 g30 r24 r42 g21 g33 r39 g66 g33 g111 r54 r36 r57 r36 r30 g39 g45 g60 g42 g36 r36 r33 g33 r45 g51 r72 g57 r75 g66 g324 g285 r84 r114 g12 r6 g9 g9';
const volEnd = 'r30 g18 g33 g327 r261 g210 r192 r198 g105 r129 g138 g105 g87 g159 r123 r102 r120 g117 r66 r75 r102 r126 r228 g120 r81 r87 r117 g99 g117 r57 r174 g117 r120 g81 g81 g78 r63 r48 g48 g75 r57 r69 g45 g39 r99 r111 r153 g138 r39';
const spikes = { 25: 'g12', 51: 'g12', 63: 'g21', 67: 'r18', 72: 'r24', 76: 'r21', 85: 'r15', 109: 'r24', 113: 'g12', 116: 'g33', 118: 'r18', 231: 'g18', 276: 'g14', 279: 'r21', 282: 'r20', 286: 'r18', 287: 'r39', 288: 'g24', 290: 'g14', 293: 'g14', 295: 'g12', 299: 'r12', 303: 'r18', 304: 'r21', 305: 'g12', 327: 'r18', 340: 'g18', 341: 'r18', 343: 'r20', 353: 'g22', 359: 'r24', 370: 'r45', 373: 'r24', 385: 'g30', 386: 'g36', 388: 'g27', 389: 'g30', 391: 'r33', 396: 'r30', 399: 'r27', 400: 'r30', 401: 'r42', 402: 'r36', 403: 'r39', 404: 'g21', 405: 'g21', 406: 'g27', 410: 'r60', 411: 'g78', 412: 'g78', 413: 'r27' };
let vol = '';
for (let i = 0; i <= 462; i++) {
  let v;
  if (i >= 122 && i <= 225) v = volMid.split(' ')[i - 122];
  else if (i >= 414) v = volEnd.split(' ')[i - 414];
  else {
    const base = i < 62 || (i > 225 && i < 272) ? 3 : i > 310 && i < 325 ? 4 : 7;
    const q = (rnd() > .5 ? 'g' : 'r') + Math.round(base + rnd() * (base === 3 ? 4 : 9));
    v = spikes[i] || q;
  }
  const h = Math.max(1, Math.round(v.slice(1) / 3));
  vol += rect(barX(i) - 1, 1011 - h, 2, h, v[0] === 'g' ? '#90ee90' : '#f00');
}
document.getElementById('volume').innerHTML = vol + dots(571, 898, 1011) + dots(895, 898, 1011) + dots(1675, 898, 1011);

function axis(id, top, height, items) {
  document.getElementById(id).insertAdjacentHTML('beforeend', items.map(([y, text, cls]) =>
    `<span class="${cls || ''}" style="top:${((y - top) / height * 100).toFixed(2)}%">${text}</span>`).join(''));
}
const prices = [];
for (let p = 2102; p >= 2072; p -= 2) prices.push([125.6 + (2102 - p) * 17.45, p + '.00', p === 2072 ? 'last' : '']);
axis('priceAxis', 99, 582, prices);
axis('deltaAxis', 682, 195, [[753, '10000'], [774.5, '5621', 'last'], [805, '0'], [859, '-10000']]);
axis('volumeAxis', 878, 134, [[935.5, '40000'], [973.5, '20000']]);

const labels = '0|1:45,10|22:35,27|8-10|day,36|0:45,45|1:30,54|2:15,63|3:00,72|3:45,81|4:30,90|5:15,99|6:00,108|6:45,117|7:30,126|8:15,135|9:00,144|9:45,153|10:30,163|11:20,173|12:10,183|13:00,193|13:50,203|14:40,213|15:30,223|16:35,233|18:10,243|19:00,253|19:50,263|20:40,273|21:30,283|22:20,293|23:10,303|8-11|day,312|0:45,321|1:30,330|2:15,339|3:00,348|3:45,357|4:30,366|5:15,375|6:00,384|6:45,393|7:30,402|8:15,411|9:00,420|9:45,429|10:30,439|11:20,449|12:10,459|13:00';
document.getElementById('times').innerHTML = labels.split(',').map(s => {
  const [i, text, cls] = s.split('|');
  return `<span class="${cls || ''}" style="left:${((barX(+i) - 3) / 1858 * 100).toFixed(3)}%">${text}</span>`;
}).join('');
```
